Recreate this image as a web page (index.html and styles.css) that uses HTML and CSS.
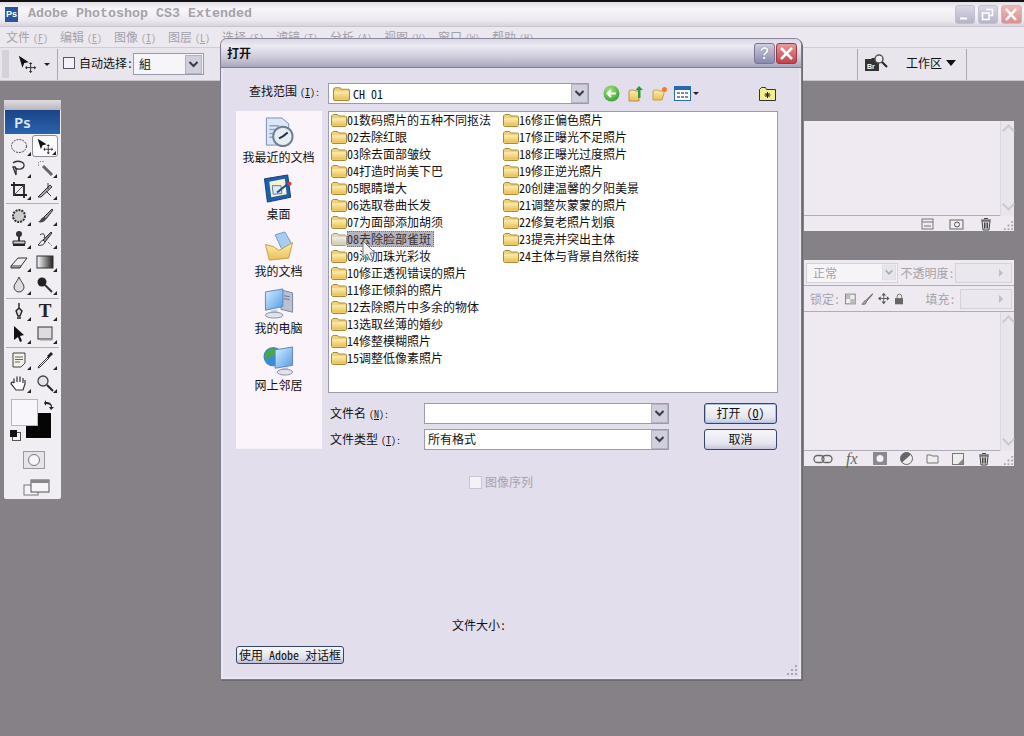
FILE: index.html
```html
<!DOCTYPE html>
<html lang="zh">
<head>
<meta charset="utf-8">
<title>Adobe Photoshop CS3 Extended</title>
<link rel="stylesheet" href="styles.css">
</head>
<body>
<svg class="defs" aria-hidden="true">
  <defs>
    <linearGradient id="fy" x1="0" y1="0" x2="0" y2="1"><stop offset="0" stop-color="#fdeeb0"/><stop offset="1" stop-color="#e9bf55"/></linearGradient>
    <linearGradient id="mon" x1="0" y1="0" x2="1" y2="1"><stop offset="0" stop-color="#d8eeff"/><stop offset="1" stop-color="#4f9be8"/></linearGradient>
    <linearGradient id="gr" x1="0" y1="0" x2="1" y2="0"><stop offset="0" stop-color="#fff"/><stop offset="1" stop-color="#222"/></linearGradient>
    <radialGradient id="grn" cx=".4" cy=".3" r=".8"><stop offset="0" stop-color="#a6e27a"/><stop offset="1" stop-color="#2f9a35"/></radialGradient>
    <symbol id="folder" viewBox="0 0 16 14"><path d="M.5 12.500V3L2 1.500h4.500l1.200 1.500h6.800l1 1v8.500l-1 1H1.500z" fill="#eed27c" stroke="#a98a3c"/><path d="M1 5.200h14v7.300H1z" fill="url(#fy)"/></symbol>
    <symbol id="combo-btn" viewBox="0 0 17 19"><rect x=".5" y=".5" width="16" height="18" fill="#d0cfdc" stroke="#b3b2c4"/><path d="M4.500 7l4 4 4-4" fill="none" stroke="#3a3a4c" stroke-width="2"/></symbol>
    <symbol id="move" viewBox="0 0 22 22"><path d="M2 2l11 7-5 1-2 5z" fill="#111"/><path d="M15 10v10M10 15h10" stroke="#222"/><path d="M15 9l-2 2h4zM15 21l-2-2h4zM9 15l2-2v4zM21 15l-2-2v4z" fill="#222"/></symbol>
    <symbol id="trash" viewBox="0 0 14 14"><path d="M3 4h8l-1 9H4z" fill="#ddd" stroke="#444"/><path d="M2 3h10M5 1.500h4M5.500 5.500v6M7 5.500v6M8.500 5.500v6" stroke="#444"/></symbol>
    <symbol id="grip" viewBox="0 0 12 12"><path d="M9 1h2v2H9zM5 5h2v2H5zM9 5h2v2H9zM1 9h2v2H1zM5 9h2v2H5zM9 9h2v2H9z" fill="#a9a6b4"/></symbol>
  </defs>
</svg>

<div class="desktop">
  <header class="titlebar">
    <span class="ps-badge">Ps</span>
    <span class="app-title">Adobe Photoshop CS3 Extended</span>
    <div class="win-btns">
      <span class="wbtn wbtn-min"><svg width="19" height="19" viewBox="0 0 19 19"><path d="M5 13.500h7" stroke="#fff" stroke-width="2"/></svg></span>
      <span class="wbtn wbtn-res"><svg width="19" height="19" viewBox="0 0 19 19"><path d="M8 4.500h6.500v6H12M4.500 8h6.500v6.500h-6.500z" fill="none" stroke="#fff" stroke-width="1.500"/></svg></span>
      <span class="wbtn wbtn-close"><svg width="20" height="19" viewBox="0 0 20 19"><path d="M5 4l10 11M15 4L5 15" stroke="#fff" stroke-width="2.500"/></svg></span>
    </div>
  </header>
  <nav class="menubar">
    <span class="menu-item">文件<span class="mn"> (<u>F</u>)</span></span><span class="menu-item">编辑<span class="mn"> (<u>E</u>)</span></span><span class="menu-item">图像<span class="mn"> (<u>I</u>)</span></span><span class="menu-item">图层<span class="mn"> (<u>L</u>)</span></span><span class="menu-item">选择<span class="mn"> (<u>S</u>)</span></span><span class="menu-item">滤镜<span class="mn"> (<u>T</u>)</span></span><span class="menu-item">分析<span class="mn"> (<u>A</u>)</span></span><span class="menu-item">视图<span class="mn"> (<u>V</u>)</span></span><span class="menu-item">窗口<span class="mn"> (<u>W</u>)</span></span><span class="menu-item">帮助<span class="mn"> (<u>H</u>)</span></span>
  </nav>
  <div class="optionsbar">
    <span class="grip"></span>
    <span class="opt-tool"><svg width="20" height="20"><use href="#move"/></svg><i class="tri-small"></i></span>
    <span class="opt-auto"><i class="check"></i>自动选择:</span>
    <span class="opt-select"><span class="opt-select-val">組</span><svg width="17" height="19"><use href="#combo-btn"/></svg></span>
    <span class="opt-spacer"></span>
    <span class="opt-right">
      <svg width="24" height="18" viewBox="0 0 24 18"><path d="M1 5h6l1-1h7v13H1z" fill="#333"/><circle cx="15" cy="5" r="4" fill="#eee" stroke="#555" stroke-width="1.500"/><path d="M18 8l5 5" stroke="#222" stroke-width="2"/><text x="3" y="15" class="br-text">Br</text></svg>
      <span class="workspace">工作区</span><i class="tri-big"></i>
    </span>
  </div>

  <aside class="toolbox">
    <div class="tb-grip"></div>
    <div class="tb-logo">Ps</div>
    <div class="tool-group tool-group-tight">
      <span class="tool"><svg viewBox="0 0 18 18"><ellipse cx="9" cy="9" rx="7.500" ry="6.500" fill="none" stroke="#444" stroke-dasharray="2 1"/></svg></span>
      <span class="tool tool-active"><svg viewBox="0 0 22 22"><use href="#move"/></svg></span>
      <span class="tool"><svg viewBox="0 0 18 18"><path d="M3 4c3-3 12-2 11 3-1 4-8 4-9 1M5 8c2 3 1 6 1 8l-3-8z" fill="none" stroke="#333" stroke-width="1.300"/></svg></span>
      <span class="tool"><svg viewBox="0 0 18 18"><path d="M7 7l9 9" stroke="#666" stroke-width="3"/><path d="M4 2l1 1M2 6h2M7 2v2M2 3l1 1" stroke="#555" stroke-dasharray="1 1"/></svg></span>
      <span class="tool"><svg viewBox="0 0 18 18"><path d="M4 1v13h13M1 4h13v13" fill="none" stroke="#222" stroke-width="1.800"/><path d="M4 14L14 4" stroke="#555"/></svg></span>
      <span class="tool"><svg viewBox="0 0 18 18"><path d="M2 16L14 4l2 2L5 16z" fill="#aaa" stroke="#333"/><path d="M10 10l5 5M12 2v6" stroke="#333"/></svg></span>
    </div>
    <div class="tool-sep"></div>
    <div class="tool-group">
      <span class="tool"><svg viewBox="0 0 18 18"><circle cx="9" cy="9" r="6" fill="#ccc" stroke="#333" stroke-width="2" stroke-dasharray="2 1"/></svg></span>
      <span class="tool"><svg viewBox="0 0 18 18"><path d="M16 2L8 10l2 2 7-9z" fill="#999" stroke="#333"/><path d="M8 10c-3 0-3 4-6 5 3 1 7 0 8-3z" fill="#444"/></svg></span>
      <span class="tool"><svg viewBox="0 0 18 18"><circle cx="9" cy="4" r="3" fill="#333"/><path d="M8 6h2v5H8z" fill="#333"/><path d="M3 11h12v3H3z" fill="#ccc" stroke="#222"/><path d="M3 15h12" stroke="#222" stroke-width="2"/></svg></span>
      <span class="tool"><svg viewBox="0 0 18 18"><path d="M15 2L7 10l2 2 7-9z" fill="#888" stroke="#333"/><path d="M7 10c-2 0-3 4-5 5 3 1 6 0 7-3zM4 5c3-3 6 0 4 3" fill="none" stroke="#333"/><path d="M12 12l4 4" stroke="#333" stroke-dasharray="1 1"/></svg></span>
      <span class="tool"><svg viewBox="0 0 18 18"><path d="M1 13l7-8h9l-6 8z" fill="#eee" stroke="#333"/><path d="M1 13v2h9l1-2" fill="#999" stroke="#333"/></svg></span>
      <span class="tool"><svg viewBox="0 0 18 18"><rect x="1" y="3" width="16" height="12" fill="url(#gr)" stroke="#333"/></svg></span>
      <span class="tool"><svg viewBox="0 0 18 18"><path d="M9 1c2 5 5 7 5 10a5 5 0 0 1-10 0c0-3 3-5 5-10z" fill="#ddd" stroke="#444"/></svg></span>
      <span class="tool"><svg viewBox="0 0 18 18"><circle cx="6" cy="6" r="4.500" fill="#222"/><path d="M9 9l7 7" stroke="#333" stroke-width="2"/></svg></span>
    </div>
    <div class="tool-sep"></div>
    <div class="tool-group">
      <span class="tool"><svg viewBox="0 0 18 18"><path d="M9 1v5l3 3-2 5H8L6 9l3-3M7 16h4" fill="#ddd" stroke="#222" stroke-width="1.400"/></svg></span>
      <span class="tool"><span class="tool-t">T</span></span>
      <span class="tool"><svg viewBox="0 0 18 18"><path d="M4 1l10 9-4 1 2 5-2 1-2-5-4 3z" fill="#111"/></svg></span>
      <span class="tool"><svg viewBox="0 0 18 18"><rect x="2" y="2" width="14" height="12" fill="#ddd" stroke="#333"/><path d="M16 4v11H4" fill="none" stroke="#999"/></svg></span>
    </div>
    <div class="tool-sep"></div>
    <div class="tool-group">
      <span class="tool"><svg viewBox="0 0 18 18"><path d="M3 2h12v10l-4 4H3z" fill="#f4f2e8" stroke="#444"/><path d="M5 6h8M5 8.500h8M5 11h5" stroke="#666"/></svg></span>
      <span class="tool"><svg viewBox="0 0 18 18"><path d="M12 6L3 15l-1 2 2-1 9-9z" fill="#fff" stroke="#333"/><path d="M11 5l2 2 4-4-2-2z" fill="#222"/></svg></span>
      <span class="tool"><svg viewBox="0 0 18 18"><path d="M4 9V4.500M7 8V2.500M10 8V2.500M13 9V4M4 9c-2-2-4 0-2 2l4 5h7l2-6V6" fill="#fff" stroke="#333" stroke-width="1.200"/></svg></span>
      <span class="tool"><svg viewBox="0 0 18 18"><circle cx="7" cy="7" r="5" fill="#e4e4ee" stroke="#444" stroke-width="1.300"/><path d="M11 11l6 6" stroke="#222" stroke-width="2"/></svg></span>
    </div>
    <div class="swatches">
      <span class="sw-bg"></span>
      <span class="sw-fg"></span>
      <svg class="sw-swap" viewBox="0 0 12 12"><path d="M2 4l2-3v2c4 0 6 2 6 5h2l-3 3-2-3h2c0-2-2-3-5-3v2z" fill="#222"/></svg>
      <span class="sw-def"></span>
    </div>
    <div class="qmask"><i></i></div>
    <div class="smode"><svg width="28" height="17" viewBox="0 0 28 17"><rect x="1" y="6" width="14" height="10" fill="#f4f2f6" stroke="#777"/><rect x="8" y="1" width="18" height="12" fill="#f6f4f8" stroke="#555"/><path d="M8 1h18v3H8z" fill="#888"/></svg></div>
  </aside>

  <section class="panel panel-top">
    <div class="panel-body"><span class="scroll-col"></span></div>
    <div class="panel-foot panel-foot-top">
      <svg width="13" height="12" viewBox="0 0 13 12"><rect x="1" y="1" width="11" height="10" fill="none" stroke="#777"/><path d="M1 4h11M3 8h7" stroke="#777"/></svg>
      <svg width="15" height="12" viewBox="0 0 15 12"><rect x="1" y="2" width="13" height="9" fill="#eee" stroke="#666"/><circle cx="8" cy="6.500" r="2.500" fill="none" stroke="#555"/></svg>
      <svg width="14" height="14"><use href="#trash"/></svg>
      <svg class="panel-grip" width="11" height="11"><use href="#grip"/></svg>
    </div>
  </section>

  <section class="panel panel-layers">
    <div class="lay-row">
      <span class="lay-select"><span class="lay-select-val">正常</span><svg class="faded" width="14" height="17"><use href="#combo-btn"/></svg></span>
      <span class="lay-label">不透明度:</span>
      <span class="lay-field"><i></i></span>
    </div>
    <div class="lay-row lay-row-2">
      <span class="lay-label">锁定:</span>
      <svg class="lock-icon" width="12" height="12" viewBox="0 0 12 12"><rect x=".5" y=".5" width="11" height="11" fill="#eee" stroke="#777"/><path d="M1 1h5v5H1zM6 6h5v5H6z" fill="#bbb"/></svg>
      <svg class="lock-icon" width="14" height="14" viewBox="0 0 14 14"><path d="M13 1L5 9l1 1 7-8zM5 9c-2 0-2 3-4 4 3 0 5 0 5-3" fill="#aaa" stroke="#666"/></svg>
      <svg class="lock-icon" width="13" height="13" viewBox="0 0 13 13"><path d="M6.500 0L4 3h5zM6.500 13L4 10h5zM0 6.500L3 4v5zM13 6.500L10 4v5z" fill="#555"/><path d="M6.500 2v9M2 6.500h9" stroke="#555"/></svg>
      <svg class="lock-icon" width="10" height="12" viewBox="0 0 10 12"><path d="M2.500 5V3a2.500 2.500 0 0 1 5 0v2" fill="none" stroke="#666"/><rect y="5" width="10" height="7" fill="#666"/></svg>
      <span class="lay-label lay-fill">填充:</span>
      <span class="lay-field"><i></i></span>
    </div>
    <div class="panel-body"><span class="scroll-col"></span></div>
    <div class="panel-foot panel-foot-layers">
      <svg width="20" height="10" viewBox="0 0 20 10"><rect x="1" y="1.500" width="10" height="7" rx="3.500" fill="none" stroke="#666" stroke-width="1.300"/><rect x="9" y="1.500" width="10" height="7" rx="3.500" fill="none" stroke="#666" stroke-width="1.300"/></svg>
      <span class="fx">fx</span>
      <svg width="14" height="13" viewBox="0 0 14 13"><rect width="14" height="13" fill="#8c8892"/><circle cx="7" cy="6.500" r="3.500" fill="#f4f0f6"/></svg>
      <svg width="13" height="13" viewBox="0 0 13 13"><circle cx="6.500" cy="6.500" r="6" fill="#eee" stroke="#666"/><path d="M11 2.500A6 6 0 0 0 2 10.500z" fill="#666"/></svg>
      <svg width="13" height="11" viewBox="0 0 13 11"><path d="M1 10V2h4l1 1h6v7z" fill="#eee" stroke="#777"/></svg>
      <svg width="12" height="12" viewBox="0 0 12 12"><rect x=".5" y=".5" width="11" height="11" fill="#eee" stroke="#777"/><path d="M11 11H6L11 6z" fill="#888"/></svg>
      <svg width="14" height="14"><use href="#trash"/></svg>
      <svg class="panel-grip" width="11" height="11"><use href="#grip"/></svg>
    </div>
  </section>

  <section class="dialog">
    <div class="dlg-title">
      <span class="dlg-title-text">打开</span>
      <span class="dlg-btn dlg-help">?</span>
      <span class="dlg-btn dlg-close"><svg width="21" height="21" viewBox="0 0 21 21"><path d="M5 5l11 11M16 5L5 16" stroke="#fff" stroke-width="2.500"/></svg></span>
    </div>
    <div class="dlg-body">
      <div class="look-row">
        <label class="look-label">查找范围<span class="mn"> (<u>I</u>):</span></label>
        <span class="combo look-combo">
          <svg width="17" height="15"><use href="#folder"/></svg>
          <span class="combo-val">CH 01</span>
          <svg class="combo-arrow" width="17" height="19"><use href="#combo-btn"/></svg>
        </span>
        <span class="look-tools">
          <svg width="17" height="17" viewBox="0 0 17 17"><circle cx="8.500" cy="8.500" r="8" fill="url(#grn)"/><path d="M13 8.500H5M8 5L4.500 8.500 8 12" fill="none" stroke="#fff" stroke-width="2"/></svg>
          <svg width="16" height="17" viewBox="0 0 16 17"><path d="M1 16V6l2-1h3l1 1h4v10z" fill="url(#fy)" stroke="#b09340"/><path d="M10 13V5H7.500L11 1l4 4h-2.500v8z" fill="#2c9a3a"/></svg>
          <svg width="16" height="15" viewBox="0 0 16 15"><path d="M1 14V5l2-1h3l1 1h5v2l-2 7z" fill="url(#fy)" stroke="#c2a24c"/><circle cx="12.500" cy="3.500" r="2.500" fill="#ef7d2c"/></svg>
          <span class="view-btn"><svg width="17" height="15" viewBox="0 0 17 15"><rect x=".5" y=".5" width="16" height="14" fill="#fff" stroke="#2a66b8"/><path d="M1 1h15v3H1z" fill="#2a66b8"/><path d="M3 6h3v2H3zM7 6h3v2H7zM11 6h3v2h-3zM3 10h3v2H3zM7 10h3v2H7zM11 10h3v2h-3z" fill="#7f8aa0"/></svg><i class="tri-small"></i></span>
        </span>
        <svg class="star-folder" width="17" height="14" viewBox="0 0 17 14"><path d="M.5 13.500V2.500l2-2h4l1 2h9v11z" fill="#f3ee8e" stroke="#333"/><path d="M8.500 5v6M5.500 8h6M6.500 6l4 4M10.500 6l-4 4" stroke="#222"/></svg>
      </div>
      <div class="main-row">
        <div class="places">
          <div class="place">
            <svg width="34" height="32" viewBox="0 0 34 32"><path d="M4 1h16l7 6v22H4z" fill="#dde6f6" stroke="#7a8cb0"/><path d="M7 9h10M7 13h8M7 17h7M7 21h7" stroke="#92a4cc" stroke-width="1.500"/><circle cx="21" cy="20" r="10" fill="#e8edf2" stroke="#6d7f96" stroke-width="2"/><path d="M21 20l5-4M21 20l-4 2" stroke="#24304a" stroke-width="2"/></svg>
            <span>我最近的文档</span>
          </div>
          <div class="place">
            <svg width="32" height="32" viewBox="0 0 32 32"><path d="M1 5l24-4 3 23-24 5z" fill="#1d5fa8" stroke="#123e78"/><path d="M6 8l16-3 2 16-16 3z" fill="#f4f3d8"/><path d="M9 12h9l1 8-9 1z" fill="#e3e8f2" stroke="#5a7aa8"/><path d="M14 19l10-8" stroke="#234a80" stroke-width="2"/><circle cx="27" cy="10" r="2" fill="#d04040"/></svg>
            <span>桌面</span>
          </div>
          <div class="place">
            <svg width="32" height="32" viewBox="0 0 32 32"><path d="M12 4l10-3 7 12-10 6z" fill="#a8cdf2" stroke="#7398c4"/><path d="M2 14l8 2 6 4 14-8-4 16-20 2z" fill="url(#fy)" stroke="#c0a040"/></svg>
            <span>我的文档</span>
          </div>
          <div class="place">
            <svg width="34" height="32" viewBox="0 0 34 32"><path d="M19 2l12 3v20l-12-3z" fill="#b9c2d4" stroke="#7c8598"/><path d="M22 8l6 1M22 11l6 1" stroke="#6f7890"/><path d="M3 4l18-3v18L3 23z" fill="url(#mon)" stroke="#6484ae"/><path d="M9 23l6-1 1 4H8z" fill="#c9ced8"/><ellipse cx="12" cy="28" rx="9" ry="3" fill="#dfe3ea" stroke="#8a92a4"/></svg>
            <span>我的电脑</span>
          </div>
          <div class="place">
            <svg width="34" height="32" viewBox="0 0 34 32"><circle cx="11" cy="12" r="10" fill="#3a8ad8"/><path d="M5 6c4-4 9-3 11 0l-3 5-6 1-3 4C1 12 2 9 5 6z" fill="#48a845"/><path d="M13 5l18-3v19l-18 3z" fill="url(#mon)" stroke="#6484ae"/><path d="M20 24l6-1 1 4h-8z" fill="#c9ced8"/><ellipse cx="23" cy="28" rx="8" ry="3" fill="#dfe3ea" stroke="#8a92a4"/></svg>
            <span>网上邻居</span>
          </div>
        </div>
        <div class="right-col">
          <div class="file-list">
            <div class="file"><svg width="16" height="14"><use href="#folder"/></svg><span>01数码照片的五种不同抠法</span></div>
            <div class="file"><svg width="16" height="14"><use href="#folder"/></svg><span>02去除红眼</span></div>
            <div class="file"><svg width="16" height="14"><use href="#folder"/></svg><span>03除去面部皱纹</span></div>
            <div class="file"><svg width="16" height="14"><use href="#folder"/></svg><span>04打造时尚美下巴</span></div>
            <div class="file"><svg width="16" height="14"><use href="#folder"/></svg><span>05眼睛增大</span></div>
            <div class="file"><svg width="16" height="14"><use href="#folder"/></svg><span>06选取卷曲长发</span></div>
            <div class="file"><svg width="16" height="14"><use href="#folder"/></svg><span>07为面部添加胡须</span></div>
            <div class="file file-hot"><svg width="16" height="14"><use href="#folder"/></svg><span>08去除脸部雀斑</span></div>
            <div class="file"><svg width="16" height="14"><use href="#folder"/></svg><span>09添加珠光彩妆</span></div>
            <div class="file"><svg width="16" height="14"><use href="#folder"/></svg><span>10修正透视错误的照片</span></div>
            <div class="file"><svg width="16" height="14"><use href="#folder"/></svg><span>11修正倾斜的照片</span></div>
            <div class="file"><svg width="16" height="14"><use href="#folder"/></svg><span>12去除照片中多余的物体</span></div>
            <div class="file"><svg width="16" height="14"><use href="#folder"/></svg><span>13选取丝薄的婚纱</span></div>
            <div class="file"><svg width="16" height="14"><use href="#folder"/></svg><span>14修整模糊照片</span></div>
            <div class="file"><svg width="16" height="14"><use href="#folder"/></svg><span>15调整低像素照片</span></div>
            <div class="file"><svg width="16" height="14"><use href="#folder"/></svg><span>16修正偏色照片</span></div>
            <div class="file"><svg width="16" height="14"><use href="#folder"/></svg><span>17修正曝光不足照片</span></div>
            <div class="file"><svg width="16" height="14"><use href="#folder"/></svg><span>18修正曝光过度照片</span></div>
            <div class="file"><svg width="16" height="14"><use href="#folder"/></svg><span>19修正逆光照片</span></div>
            <div class="file"><svg width="16" height="14"><use href="#folder"/></svg><span>20创建温馨的夕阳美景</span></div>
            <div class="file"><svg width="16" height="14"><use href="#folder"/></svg><span>21调整灰蒙蒙的照片</span></div>
            <div class="file"><svg width="16" height="14"><use href="#folder"/></svg><span>22修复老照片划痕</span></div>
            <div class="file"><svg width="16" height="14"><use href="#folder"/></svg><span>23提亮并突出主体</span></div>
            <div class="file"><svg width="16" height="14"><use href="#folder"/></svg><span>24主体与背景自然衔接</span></div>
            <svg class="cursor" width="14" height="21" viewBox="0 0 14 21"><path d="M1 1v16l4-3 3 6 3-1-3-6h5z" fill="#f4f4f4" stroke="#777"/></svg>
          </div>
          <div class="form-row">
            <label class="form-label">文件名<span class="mn"> (<u>N</u>):</span></label>
            <span class="combo form-combo"><span class="combo-val"></span><svg class="combo-arrow" width="17" height="19"><use href="#combo-btn"/></svg></span>
            <button class="btn btn-default">打开 (<u>O</u>)</button>
          </div>
          <div class="form-row">
            <label class="form-label">文件类型<span class="mn"> (<u>T</u>):</span></label>
            <span class="combo form-combo"><span class="combo-val">所有格式</span><svg class="combo-arrow" width="17" height="19"><use href="#combo-btn"/></svg></span>
            <button class="btn">取消</button>
          </div>
        </div>
      </div>
      <div class="seq-row"><i class="seq-check"></i>图像序列</div>
      <div class="size-row">文件大小:</div>
      <button class="adobe-btn">使用 Adobe 对话框</button>
      <svg class="resize-grip" width="12" height="12"><use href="#grip"/></svg>
    </div>
  </section>
</div>
</body>
</html>
```
FILE: styles.css
```css
* { box-sizing: border-box; }
html, body { margin: 0; padding: 0; }
body {
  width: 1024px;
  height: 736px;
  overflow: hidden;
  font: 12px/14px "Noto Sans Mono CJK SC", "Noto Sans CJK SC", "Liberation Mono", monospace;
  color: #111;
  background: #858187;
}
u { text-decoration: underline; }
i { display: block; }
.mn { font-size: 10px; word-spacing: -2px; }
.defs { position: absolute; width: 0; height: 0; }
.desktop { position: relative; width: 1024px; height: 736px; overflow: hidden; border-top: 2px solid #111; }

/* app chrome */
.titlebar {
  height: 25px;
  display: flex;
  align-items: center;
  padding: 0 2px 0 5px;
  background: linear-gradient(#e2dee7, #f8f6fa 30%, #ece9f0 75%, #d9d5de);
  border-bottom: 1px solid #c9c5ce;
}
.ps-badge {
  width: 13px;
  height: 15px;
  margin-right: 10px;
  font: bold 9px/15px "Liberation Sans", sans-serif;
  text-align: center;
  color: #fff;
  background: #28569e;
}
.app-title { font: bold 13.33px/16px "Liberation Mono", monospace; color: #a5a3a9; }
.win-btns { margin-left: auto; display: flex; gap: 3px; }
.wbtn { height: 19px; border-radius: 3px; border: 1px solid #c2bfcf; display: block; }
.wbtn svg { display: block; margin: -1px; }
.wbtn-min, .wbtn-res { width: 20px; background: linear-gradient(#d9d8e4, #b5b3c8); }
.wbtn-close { width: 21px; background: linear-gradient(#edb8b8, #d99092); border-color: #dbb0b0; }
.menubar {
  height: 20px;
  display: flex;
  padding-left: 6px;
  background: #ece8ef;
}
.menu-item { width: 54px; font-size: 12px; line-height: 20px; color: #a4a1a8; white-space: nowrap; }
.optionsbar {
  height: 34px;
  display: flex;
  align-items: center;
  background: #e9e5ec;
  border-top: 1px solid #cfccd3;
  border-bottom: 1px solid #c8c5cb;
}
.grip { width: 7px; height: 28px; margin-left: 2px; background: #d6d2d9; }
.opt-tool {
  width: 49px;
  height: 31px;
  display: flex;
  align-items: center;
  gap: 7px;
  padding-left: 8px;
  border-right: 1px solid #aaa7ae;
}
.tri-small { width: 0; height: 0; border: 3px solid transparent; border-top-color: #222; border-bottom: 0; }
.opt-auto { display: flex; align-items: center; margin: -3px 0 0 5px; gap: 4px; width: 70px; }
.check { width: 12px; height: 12px; border: 1px solid #56566c; background: #f4f2f6; }
.opt-select {
  width: 71px;
  height: 22px;
  display: flex;
  align-items: center;
  justify-content: space-between;
  padding: 0 1px 0 5px;
  background: #f7f5f9;
  border: 1px solid #989ab0;
}
.opt-spacer { flex: 1; }
.opt-right {
  width: 110px;
  height: 31px;
  margin-right: 57px;
  display: flex;
  align-items: center;
  padding: 0 0 3px 6px;
  border-left: 1px solid #aaa7ae;
  border-right: 1px solid #aaa7ae;
}
.br-text { font: bold 7px "Liberation Sans", sans-serif; fill: #fff; }
.workspace { margin-left: 18px; }
.tri-big { width: 0; height: 0; margin-left: 4px; border: 5px solid transparent; border-top: 6px solid #111; border-bottom: 0; }

/* toolbox */
.toolbox {
  position: absolute;
  left: 4px;
  top: 98px;
  width: 57px;
  height: 399px;
  background: #f0edf3;
  border-radius: 2px;
}
.tb-grip { height: 10px; background: linear-gradient(#dedbe1, #b8b5bc); }
.tb-logo {
  height: 24px;
  margin: 0 1px;
  padding-left: 9px;
  font: 600 15px/24px "Noto Sans", sans-serif;
  color: #dfe7f5;
  background: linear-gradient(#1a4487, #2a62ad);
}
.tool-group { display: grid; grid-template-columns: 26px 26px; grid-auto-rows: 23px; padding: 0 2px; }
.tool-group-tight { grid-auto-rows: 22px; padding-top: 1px; }
.tool { position: relative; display: flex; align-items: center; justify-content: center; }
.tool svg { width: 18px; height: 18px; }
.tool::after {
  content: "";
  position: absolute;
  right: 1px;
  bottom: 1px;
  border: 2px solid transparent;
  border-right-color: #222;
  border-bottom-color: #222;
}
.tool-active { background: #fbfafc; border: 1px solid #8f8c98; border-radius: 3px; }
.tool-t { font: bold 19px/20px "Liberation Serif", serif; color: #222; }
.tool-sep { height: 1px; margin: 2px 2px 0; background: #b2afb7; }
.swatches { position: relative; height: 49px; margin-top: 4px; }
.sw-bg { position: absolute; left: 21px; top: 14px; width: 27px; height: 27px; background: #050505; border: 1px solid #f6f4f8; z-index: 0; }
.sw-fg { position: absolute; left: 7px; top: 1px; width: 27px; height: 27px; background: #f8f6fa; border: 1px solid #b8b5bc; z-index: 1; }
.sw-swap { position: absolute; left: 38px; top: 1px; width: 12px; height: 12px; }
.sw-def {
  position: absolute;
  left: 6px;
  top: 32px;
  width: 7px;
  height: 7px;
  background: #111;
  box-shadow: 3px 3px 0 0 #f6f4f8, 3px 3px 0 1px #555;
}
.qmask {
  width: 22px;
  height: 18px;
  margin: 4px 0 0 19px;
  display: flex;
  align-items: center;
  justify-content: center;
  border: 1px solid #9a97a1;
  background: #e6e3e9;
}
.qmask i { width: 12px; height: 12px; border-radius: 50%; border: 1px solid #777; background: #f6f4f8; }
.smode { margin: 10px 0 0 19px; }
.smode svg { display: block; }

/* right panels */
.panel {
  position: absolute;
  left: 804px;
  width: 210px;
  display: flex;
  flex-direction: column;
  background: #efeaf2;
}
.panel-top { top: 119px; height: 110px; }
.panel-layers { top: 258px; height: 206px; }
.panel-body { flex: 1; position: relative; border-bottom: 1px solid #b0adb6; margin-right: 14px; }
.scroll-col { position: absolute; right: -14px; top: 0; bottom: -1px; width: 14px; background: #e9e5ec; border-left: 1px solid #dcd8df; }
.scroll-col::before, .scroll-col::after {
  content: "";
  position: absolute;
  left: 3px;
  width: 7px;
  height: 7px;
  border-left: 2px solid #cbc8d0;
  border-top: 2px solid #cbc8d0;
  transform: rotate(45deg);
}
.scroll-col::before { top: 5px; }
.scroll-col::after { bottom: 7px; transform: rotate(225deg); }
.panel-foot { position: relative; height: 15px; display: flex; align-items: center; }
.panel-foot svg { display: block; }
.panel-foot .panel-grip { position: absolute; right: 0; bottom: 0; }
.panel-foot-top { justify-content: flex-end; gap: 15px; padding-right: 21px; }
.panel-foot-layers { gap: 13px; padding-left: 9px; }
.fx { font: italic 16px/15px "Liberation Serif", serif; color: #666; width: 14px; }
.faded { opacity: .4; }
.lay-row {
  height: 26px;
  display: flex;
  align-items: center;
  padding: 0 2px;
  border-bottom: 1px solid #b0adb6;
  color: #a5a2a9;
}
.lay-row-2 { gap: 5px; padding-left: 6px; }
.lay-select {
  width: 92px;
  height: 20px;
  display: flex;
  align-items: center;
  justify-content: space-between;
  padding: 0 1px 0 6px;
  border: 1px solid #d5d1d8;
  background: #f7f4f8;
  margin-right: 3px;
}
.lay-label { width: 55px; white-space: nowrap; }
.lay-row-2 .lay-label { width: 30px; }
.lay-row-2 .lay-fill { margin-left: 17px; }
.lay-field {
  width: 57px;
  height: 20px;
  display: flex;
  align-items: center;
  justify-content: flex-end;
  padding-right: 8px;
  border: 1px solid #d5d1d8;
  background: #ebe7ee;
}
.lay-field i { width: 0; height: 0; border: 4px solid transparent; border-left: 4px solid #c2bec6; border-right: 0; }
.lock-icon { display: block; }

/* dialog */
.dialog {
  position: absolute;
  left: 220px;
  top: 36px;
  width: 582px;
  height: 642px;
  display: flex;
  flex-direction: column;
  padding: 0 2px 2px;
  background: #e9e7ef;
  border: 1px solid #7d7a8e;
  border-top-color: #8c899c;
  border-radius: 7px 7px 0 0;
  box-shadow: 1px 1px 0 #6d6a72;
}
.dlg-title {
  height: 29px;
  display: flex;
  align-items: center;
  padding: 0 4px 0 3px;
  margin: 0 -2px;
  background: linear-gradient(#d9d7e2, #eceaf2 25%, #c9c7d6 70%, #a8a6bb);
  border-radius: 6px 6px 0 0;
  border-bottom: 1px solid #7e7b92;
}
.dlg-title-text { margin-left: 3px; font-weight: 700; font-size: 12px; }
.dlg-btn { width: 21px; height: 21px; border-radius: 3px; display: block; }
.dlg-help {
  margin-left: auto;
  margin-right: 1px;
  font: bold 16px/20px "Liberation Sans", sans-serif;
  text-align: center;
  color: #f4f4f8;
  background: linear-gradient(#cfcde0, #8a88ac);
  border: 1px solid #7a7890;
  text-shadow: 0 0 1px #444;
}
.dlg-close { background: linear-gradient(#e89a9a, #c43f46); border: 1px solid #9c3a40; }
.dlg-close svg { display: block; margin: -1px; }
.dlg-body { position: relative; flex: 1; padding: 15px 0 0 13px; background: #e3deec; }
.look-row { height: 21px; display: flex; align-items: center; }
.look-label { width: 92px; padding-left: 13px; margin-top: -5px; white-space: nowrap; }
.combo {
  display: flex;
  align-items: center;
  height: 21px;
  padding-left: 4px;
  gap: 3px;
  background: #fff;
  border: 1px solid #9a9bb0;
}
.combo-val { flex: 1; }
.combo-arrow { display: block; }
.look-combo { width: 261px; padding-left: 4px; }
.look-tools { display: flex; align-items: center; gap: 8px; margin-left: 14px; }
.look-tools svg { display: block; }
.view-btn { display: flex; align-items: center; gap: 2px; margin-left: -2px; }
.star-folder { display: block; margin-left: 60px; }
.main-row { display: flex; gap: 6px; margin-top: 7px; }
.places {
  width: 86px;
  height: 338px;
  padding: 6px 1px 0 0;
  background: #fbf4fb;
  border-bottom: 1px solid #f4f1f7;
}
.place { height: 57px; display: flex; flex-direction: column; align-items: center; white-space: nowrap; }
.place svg { display: block; height: 31px; flex: none; }
.place span { line-height: 14px; margin-top: 2px; }
.right-col { width: 450px; }
.file-list {
  position: relative;
  height: 282px;
  display: grid;
  grid-auto-flow: column;
  grid-template-rows: repeat(15, 17px);
  grid-template-columns: 172px 172px;
  justify-content: start;
  padding: 0 0 0 1px;
  background: #fff;
  border: 1px solid #9a9bb0;
}
.file { display: flex; align-items: center; height: 16px; padding-left: 1px; white-space: nowrap; }
.file svg { display: block; flex: none; }
.file-hot svg { opacity: .85; filter: grayscale(.75); }
.file-hot span { background: #b6b2be; outline: 1px dotted #777; outline-offset: -1px; color: #333; padding-right: 3px; line-height: 16px; }
.cursor { position: absolute; left: 33px; top: 128px; }
.form-row { height: 26px; margin-top: 7px; display: flex; align-items: center; }
.form-row + .form-row { margin-top: 0; }
.form-label { width: 96px; padding-left: 2px; white-space: nowrap; }
.form-combo { width: 245px; padding-left: 3px; }
.btn {
  width: 73px;
  height: 21px;
  margin-left: 35px;
  padding: 0;
  font: inherit;
  color: #111;
  background: linear-gradient(#f6f6fa, #e6e6f0 70%, #c5c6dc);
  border: 1px solid #36456c;
  border-radius: 3px;
}
.btn-default { box-shadow: inset 0 0 0 1px #a9c0e8; }
.seq-row {
  margin: 23px 0 0 233px;
  display: flex;
  align-items: center;
  gap: 3px;
  color: #a7a4ad;
}
.seq-check { width: 13px; height: 13px; border: 1px solid #c9c6cf; background: #f4f2f6; }
.size-row { margin: 129px 0 0 216px; }
.adobe-btn {
  display: block;
  width: 108px;
  height: 18px;
  margin-top: 14px;
  padding: 0;
  font: inherit;
  color: #111;
  white-space: nowrap;
  background: linear-gradient(#f8f8fb, #e0e0ec 70%, #bcbdd6);
  border: 1px solid #36456c;
  border-radius: 3px;
}
.resize-grip { position: absolute; right: 1px; bottom: 1px; }
```
